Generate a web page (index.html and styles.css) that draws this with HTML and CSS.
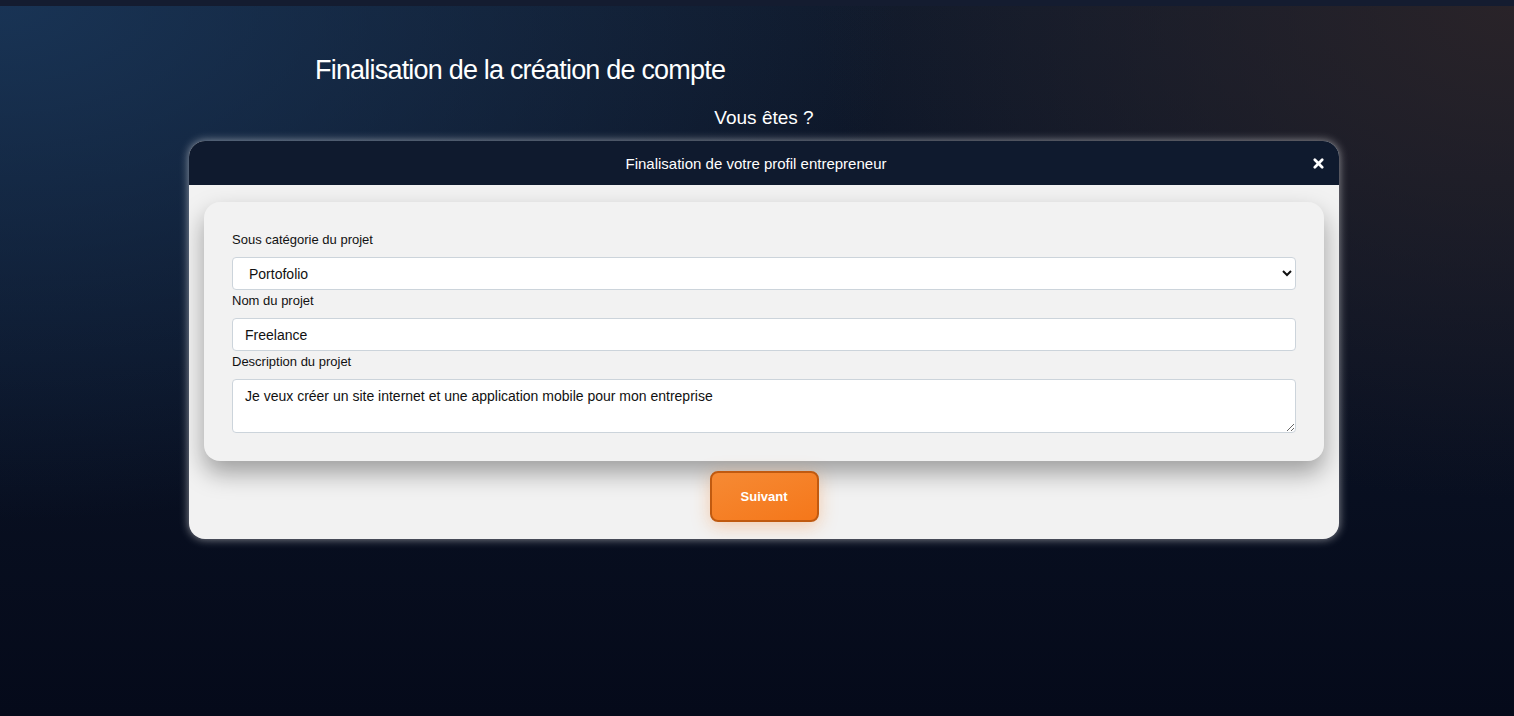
FILE: index.html
```html
<!DOCTYPE html>
<html lang="fr">
<head>
  <meta charset="UTF-8">
  <title>Finalisation de la création de compte</title>
  <link rel="stylesheet" href="styles.css">
</head>
<body>

  <div class="topbar"></div>

  <div class="page">
    <h1 class="titre">Finalisation de la création de compte</h1>
    <p class="question">Vous êtes ?</p>

    <div class="modal">
      <div class="modal-header">
        <span>Finalisation de votre profil entrepreneur</span>
        <button class="fermer" aria-label="Fermer">
          <svg width="11" height="11" viewBox="0 0 12 12">
            <path d="M2 2 L10 10 M10 2 L2 10" stroke="#fff" stroke-width="3" stroke-linecap="round" />
          </svg>
        </button>
      </div>

      <div class="modal-body">
        <div class="carte">
          <label for="sous-categorie">Sous catégorie du projet</label>
          <select id="sous-categorie">
            <option>Portofolio</option>
            <option>Site vitrine</option>
            <option>E-commerce</option>
          </select>

          <label for="nom">Nom du projet</label>
          <input type="text" id="nom" value="Freelance" />

          <label for="description">Description du projet</label>
          <textarea id="description">Je veux créer un site internet et une application mobile pour mon entreprise</textarea>
        </div>

        <button class="suivant">Suivant</button>
      </div>
    </div>
  </div>

</body>
</html>
```

FILE: styles.css
```css
html, body {
  height: 100%;
}

body {
  margin: 0;
  font-family: 'Liberation Sans', Arial, sans-serif;
  color: #fff;
  background-color: #060c1c;
  background-image:
    radial-gradient(ellipse 900px 520px at 0% 0%, rgba(26, 56, 92, 0.85), rgba(26, 56, 92, 0) 100%),
    radial-gradient(ellipse 700px 500px at 100% 0%, rgba(44, 36, 40, 0.9), rgba(44, 36, 40, 0) 100%),
    linear-gradient(#101a2c 0%, #0a1224 50%, #050a1a 100%);
  overflow: hidden;
}

.topbar {
  height: 6px;
  background-color: #141c30;
}

.page {
  width: 1150px;
  margin: 0 0 0 189px;
}

.titre {
  margin: 48px 0 0 126px;
  font-size: 27px;
  font-weight: normal;
  letter-spacing: -0.8px;
  line-height: 32px;
}

.question {
  margin: 20px 0 11px;
  text-align: center;
  font-size: 19px;
  line-height: 24px;
}

.modal {
  background-color: #f2f2f2;
  border-radius: 16px;
  overflow: hidden;
  box-shadow: 0 0 10px rgba(255, 255, 255, 0.55);
}

.modal-header {
  position: relative;
  height: 44px;
  padding-right: 16px;
  background-color: #0f1a2e;
  display: flex;
  align-items: center;
  justify-content: center;
  font-size: 15px;
}

.fermer {
  position: absolute;
  right: 15px;
  top: 17px;
  background: none;
  border: none;
  padding: 0;
  cursor: pointer;
  line-height: 0;
}

.modal-body {
  padding: 17px 15px 17px;
  display: flex;
  flex-direction: column;
  align-items: center;
}

.carte {
  align-self: stretch;
  background-color: #f2f2f2;
  border-radius: 16px;
  padding: 30px 28px 28px;
  display: flex;
  flex-direction: column;
  box-shadow: 0 12px 24px rgba(0, 0, 0, 0.35);
  color: #111;
}

label {
  font-size: 13px;
  line-height: 16px;
  color: #111;
}

select, input, textarea {
  font-family: 'Liberation Sans', Arial, sans-serif;
  font-size: 14px;
  color: #111;
  background-color: #fff;
  border: 1px solid #ccd4db;
  border-radius: 4px;
  box-sizing: border-box;
  width: 100%;
  margin: 9px 0 3px;
}

select {
  height: 33px;
  padding: 0 12px;
}

input {
  height: 33px;
  padding: 0 12px;
}

textarea {
  height: 54px;
  padding: 8px 12px;
  margin-bottom: 0;
  resize: vertical;
}

.suivant {
  margin-top: 10px;
  width: 109px;
  height: 51px;
  border-radius: 8px;
  border: 2px solid #c05a10;
  background: linear-gradient(160deg, #f68a34, #f5771a);
  color: #fff;
  font-family: 'Liberation Sans', Arial, sans-serif;
  font-weight: bold;
  font-size: 13px;
  cursor: pointer;
  box-shadow: 0 4px 18px rgba(245, 130, 40, 0.35);
}
```
